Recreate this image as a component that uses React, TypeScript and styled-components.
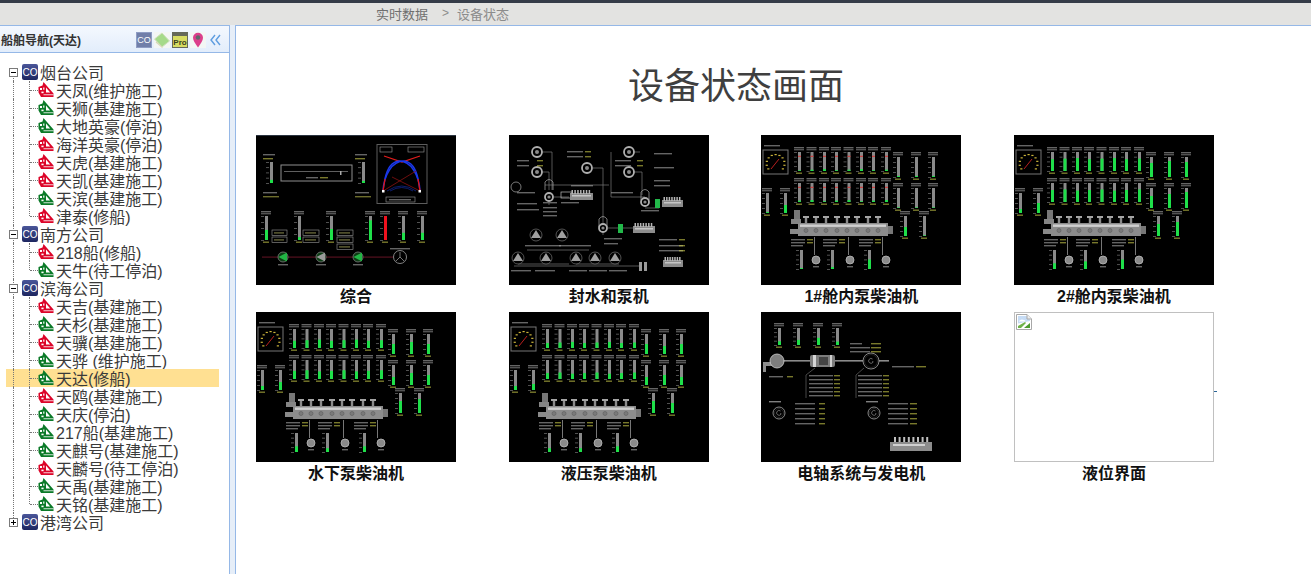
import React from 'react'
import styled, { createGlobalStyle } from 'styled-components'

const GlobalStyle = createGlobalStyle`
  html, body {
    margin: 0;
    padding: 0;
    background: #fff;
    overflow: hidden;
  }
  body {
    font-family: "Liberation Sans", "Noto Sans CJK SC", sans-serif;
  }
`

const Page = styled.div`
  display: flex;
  flex-direction: column;
  width: 1311px;
  height: 574px;
  overflow: hidden;
`

const TopBar = styled.header`
  box-sizing: border-box;
  height: 25px;
  flex: none;
  display: flex;
  align-items: center;
  padding: 0 0 2px 376px;
  background: #e3e3e1;
  border-top: 3px solid #353c48;
  font-size: 13px;
  color: #777;
`

const Crumb = styled.span<{ $muted?: boolean }>`
  color: ${({ $muted }) => ($muted ? '#8c8c8c' : '#6f6f6f')};
`

const CrumbSep = styled.span`
  margin: 0 8px 0 14px;
  color: #8c8c8c;
  font-size: 12px;
`

const Body = styled.div`
  flex: 1;
  display: flex;
  min-height: 0;
  background: #e6eef8;
`

const Sidebar = styled.aside`
  box-sizing: border-box;
  width: 230px;
  flex: none;
  background: #fff;
  border-top: 1px solid #95b8e7;
  border-right: 1px solid #95b8e7;
  display: flex;
  flex-direction: column;
`

const SideHeader = styled.div`
  box-sizing: border-box;
  height: 27px;
  flex: none;
  display: flex;
  align-items: center;
  justify-content: space-between;
  padding: 1px 8px 0 1px;
  background: linear-gradient(#f4f8fe, #e2edfb);
  border-bottom: 1px solid #95b8e7;
`

const SideTitle = styled.span`
  font-size: 12px;
  font-weight: 700;
  color: #333;
  white-space: nowrap;
`

const HeaderTools = styled.div`
  display: flex;
  align-items: center;
  gap: 2px;
`

const ToolCo = styled.span`
  box-sizing: border-box;
  width: 16px;
  height: 16px;
  display: flex;
  align-items: center;
  justify-content: center;
  background: #717fa9;
  border: 1px solid #8f9dc4;
  color: #fff;
  font: 400 9px "Liberation Sans", sans-serif;
`

const ToolPro = styled.span`
  box-sizing: border-box;
  width: 16px;
  height: 16px;
  display: flex;
  align-items: flex-end;
  justify-content: center;
  background: #d7dc62;
  border-top: 4px solid #65695a;
  border-left: 1px solid #65695a;
  border-right: 1px solid #65695a;
  border-bottom: 1px solid #65695a;
  color: #3b4020;
  font: 700 8px/9px "Liberation Sans", sans-serif;
`

const ToolSvg = styled.svg`
  display: block;
  width: 16px;
  height: 16px;
  background: #f3f6f4;
`

const Collapse = styled.svg`
  display: block;
  width: 11px;
  height: 12px;
  margin-left: 2px;
`

const Tree = styled.div`
  padding: 10px 10px 0 6px;
`

const Row = styled.div<{ $selected?: boolean; $child?: boolean }>`
  position: relative;
  height: 18px;
  display: flex;
  align-items: center;
  padding-left: ${({ $child }) => ($child ? '32px' : '3px')};
  background: ${({ $selected }) => ($selected ? '#ffe092' : 'transparent')};
  font-size: 16px;
  line-height: 18px;
  color: #3a3a3a;
  white-space: pre;
`

const RowText = styled.span`
  padding-top: 4px;
`

const GuideV = styled.span<{ $left: number; $top?: number; $bottom?: number }>`
  position: absolute;
  left: ${({ $left }) => $left}px;
  top: ${({ $top = 0 }) => $top}px;
  bottom: ${({ $bottom = 0 }) => $bottom}px;
  border-left: 1px dotted #777;
`

const GuideH = styled.span<{ $left: number; $width: number }>`
  position: absolute;
  left: ${({ $left }) => $left}px;
  width: ${({ $width }) => $width}px;
  top: 9px;
  border-top: 1px dotted #777;
`

const Toggle = styled.span`
  position: relative;
  box-sizing: border-box;
  flex: none;
  width: 9px;
  height: 9px;
  margin-right: 4px;
  background: #fff;
  border: 1px solid #7a7a7a;
`

const ToggleMark = styled.span<{ $plus?: boolean }>`
  position: absolute;
  left: 1px;
  top: 3px;
  width: 5px;
  height: 1px;
  background: #000;
  &::after {
    content: '';
    display: ${({ $plus }) => ($plus ? 'block' : 'none')};
    position: absolute;
    left: 2px;
    top: -2px;
    width: 1px;
    height: 5px;
    background: #000;
  }
`

const CompanyIcon = styled.span`
  box-sizing: border-box;
  position: relative;
  flex: none;
  width: 16px;
  height: 16px;
  margin-right: 2px;
  display: flex;
  align-items: center;
  justify-content: center;
  border-radius: 2px;
  background: linear-gradient(#4a5699, #1d2660);
  color: #fff;
  font: 400 10px "Liberation Sans", sans-serif;
`

const ShipSvg = styled.svg`
  position: relative;
  flex: none;
  display: block;
  width: 16px;
  height: 16px;
  margin-right: 2px;
`

const Main = styled.main`
  flex: 1;
  min-width: 0;
  margin-left: 5px;
  background: #fff;
  border-top: 1px solid #95b8e7;
  border-left: 1px solid #95b8e7;
  padding-left: 20px;
`

const Heading = styled.h1`
  width: 960px;
  margin: 0;
  padding-top: 36px;
  height: 73px;
  text-align: center;
  font-size: 36px;
  font-weight: 400;
  line-height: 50px;
  color: #3f3f3f;
`

const Gallery = styled.div`
  display: grid;
  grid-template-columns: repeat(4, 252.67px);
  grid-auto-rows: 177px;
`

const Tile = styled.figure`
  width: 200px;
  margin: 0;
`

const Shot = styled.svg`
  display: block;
  width: 200px;
  height: 150px;
  background: #000;
  filter: blur(0.5px);
`

const BrokenShot = styled.div`
  position: relative;
  box-sizing: border-box;
  width: 200px;
  height: 150px;
  padding: 1px;
  border: 1px solid #c0c0c0;
  &::after {
    content: '';
    position: absolute;
    right: -4px;
    top: 78px;
    width: 3px;
    height: 1px;
    background: #2a6496;
  }
`

const Caption = styled.figcaption`
  text-align: center;
  font-size: 16px;
  font-weight: 700;
  line-height: 24px;
  color: #111;
`

type Ship = { name: string; red?: boolean; selected?: boolean }
type Company = { name: string; open: boolean; ships: Ship[] }

const companies: Company[] = [
  {
    name: '烟台公司',
    open: true,
    ships: [
      { name: '天凤(维护施工)', red: true },
      { name: '天狮(基建施工)' },
      { name: '大地英豪(停泊)' },
      { name: '海洋英豪(停泊)', red: true },
      { name: '天虎(基建施工)', red: true },
      { name: '天凯(基建施工)', red: true },
      { name: '天滨(基建施工)' },
      { name: '津泰(修船)', red: true },
    ],
  },
  {
    name: '南方公司',
    open: true,
    ships: [{ name: '218船(修船)', red: true }, { name: '天牛(待工停泊)' }],
  },
  {
    name: '滨海公司',
    open: true,
    ships: [
      { name: '天吉(基建施工)', red: true },
      { name: '天杉(基建施工)' },
      { name: '天骥(基建施工)', red: true },
      { name: '天骅 (维护施工)' },
      { name: '天达(修船)', selected: true },
      { name: '天鸥(基建施工)', red: true },
      { name: '天庆(停泊)' },
      { name: '217船(基建施工)' },
      { name: '天麒号(基建施工)' },
      { name: '天麟号(待工停泊)', red: true },
      { name: '天禹(基建施工)' },
      { name: '天铭(基建施工)' },
    ],
  },
  { name: '港湾公司', open: false, ships: [] },
]

const ShipIcon = ({ red }: { red?: boolean }) => {
  const c = red ? '#dc0529' : '#0b7a28'
  return (
    <ShipSvg viewBox="0 0 16 16">
      <path d="M5.5 0 L15.5 11.5 V15 H3 L0.5 10.5 V5 L4.5 3.5 Z" fill={c} />
      <path d="M8 5.6 L12.2 10.4 H8 Z" fill="#fff" />
      <rect x="2" y="6" width="2" height="2" fill="#fff" />
      <rect x="5.2" y="5.5" width="1.2" height="2.2" fill="#fff" />
      <rect x="3.4" y="9.6" width="2.2" height="1.6" fill="#fff" />
      <rect x="5.5" y="12.4" width="10" height="0.8" fill="#fff" />
    </ShipSvg>
  )
}

const NavTree = () => (
  <Tree>
    {companies.map((company, ci) => {
      const lastCompany = ci === companies.length - 1
      return (
        <React.Fragment key={company.name}>
          <Row>
            <GuideV $left={7} $top={ci === 0 ? 9 : 0} $bottom={lastCompany ? 9 : 0} />
            <Toggle>
              <ToggleMark $plus={!company.open} />
            </Toggle>
            <CompanyIcon>CO</CompanyIcon>
            <RowText>{company.name}</RowText>
          </Row>
          {company.ships.map((ship, si) => (
            <Row key={ship.name} $child $selected={ship.selected}>
              <GuideV $left={7} />
              <GuideV $left={23} $bottom={si === company.ships.length - 1 ? 9 : 0} />
              <GuideH $left={24} $width={8} />
              <ShipIcon red={ship.red} />
              <RowText>{ship.name}</RowText>
            </Row>
          ))}
        </React.Fragment>
      )
    })}
  </Tree>
)

/* tiny label placeholder: the captions in the thumbnails are unreadable smudges */
const Smudge = ({ x, y, w, c = '#a8a8a8' }: { x: number; y: number; w: number; c?: string }) => (
  <rect x={x} y={y} width={w} height={1.4} fill={c} opacity={0.6} />
)

const Gauge = ({
  x,
  y,
  h,
  fill,
  color = '#1fe04a',
  mark,
  label = true,
}: {
  x: number
  y: number
  h: number
  fill: number
  color?: string
  mark?: boolean
  label?: boolean
}) => (
  <g>
    {label && <Smudge x={x - 5} y={y - 5} w={10} />}
    {label && <Smudge x={x - 5} y={y - 3} w={10} c="#888" />}
    <rect x={x - 1} y={y} width={3} height={h} fill="#8a8a8a" />
    <rect x={x - 1} y={y + h * (1 - fill)} width={3} height={h * fill} fill={color} />
    {mark && <rect x={x - 1} y={y + h * 0.2} width={3} height={1} fill="#d33" />}
    {Array.from({ length: 5 }, (_, i) => (
      <rect key={i} x={x - 5} y={y + (h * i) / 4} width={3} height={0.8} fill="#666" />
    ))}
    {label && <Smudge x={x - 3} y={y + h + 1.5} w={6} c="#c9c94a" />}
  </g>
)

const Pump = ({ x, y, fill }: { x: number; y: number; fill: string }) => (
  <g>
    <circle cx={x} cy={y} r={5} fill="#0c3d14" stroke="#7d7d7d" strokeWidth={0.8} />
    <path d={`M${x + 4} ${y - 4.5} L${x - 4.5} ${y} L${x + 4} ${y + 4.5} Z`} fill={fill} />
    <Smudge x={x - 5} y={y + 7} w={10} />
  </g>
)

const OverviewShot = () => (
  <Shot viewBox="0 0 200 150">
    <rect x="0" y="0" width="200" height="1" fill="#2b3440" />
    <Smudge x={7} y={19} w={12} />
    <Smudge x={7} y={23} w={10} c="#c9c94a" />
    <Gauge x={15} y={27} h={21} fill={0.15} label={false} />
    <Smudge x={7} y={57} w={14} />
    <Smudge x={7} y={61} w={16} c="#b5b54a" />
    <rect x="25" y="30" width="71" height="16" fill="none" stroke="#8f8f8f" />
    <rect x="28" y="36" width="64" height="0.8" fill="#777" />
    <rect x="84" y="36" width="1.5" height="4" fill="#aaa" />
    <Smudge x={50} y={42} w={12} />
    <Smudge x={64} y={42} w={8} c="#c9c94a" />
    <Smudge x={99} y={19} w={12} />
    <Smudge x={99} y={23} w={10} c="#c9c94a" />
    <Gauge x={107} y={27} h={21} fill={0.1} label={false} />
    <Smudge x={99} y={57} w={14} />
    <Smudge x={99} y={61} w={16} c="#b5b54a" />

    <rect x="121" y="9.5" width="50" height="59" fill="#000" stroke="#5c5c5c" />
    <rect x="124" y="12" width="12" height="5" fill="none" stroke="#999" strokeWidth="0.6" />
    <rect x="152" y="12" width="16" height="5" fill="none" stroke="#999" strokeWidth="0.6" />
    <path d="M128 21 L146 27 L164 21" fill="none" stroke="#e21c1c" strokeWidth="1.3" />
    <path d="M127 56 C128 40 136 26 148 26 C156 27 160 34 162 44" fill="none" stroke="#1a38e8" strokeWidth="1.5" />
    <path d="M164 56 C163 40 155 26 143 26 C135 27 131 34 129 44" fill="none" stroke="#1a38e8" strokeWidth="1.5" />
    <path d="M162 44 L164 56 M129 44 L127 56" stroke="#e01515" strokeWidth="1.3" />
    <path d="M127 56 L160 36 M164 56 L136 42" stroke="#8a1212" strokeWidth="0.8" />
    <path d="M131 56 Q146 46 160 56 M134 56 Q146 49 157 56" fill="none" stroke="#122a9a" strokeWidth="0.7" />
    <rect x="126" y="55" width="2.5" height="2.5" fill="#fff" />
    <rect x="162.5" y="55" width="2.5" height="2.5" fill="#fff" />
    <rect x="130" y="62" width="29" height="5" fill="none" stroke="#999" strokeWidth="0.6" />
    <Smudge x={133} y={64} w={22} />

    {[
      { x: 10, fill: 0.42 },
      { x: 43, fill: 0.12 },
      { x: 75, fill: 0.46 },
      { x: 114, fill: 0.82 },
      { x: 129, fill: 1, color: '#f0121e' },
      { x: 147, fill: 0.3 },
      { x: 166, fill: 0.3 },
    ].map(g => (
      <Gauge key={g.x} x={g.x} y={81} h={24} fill={g.fill} color={g.color} />
    ))}
    {[
      [16, 95, 15],
      [16, 102, 15],
      [47, 95, 16],
      [47, 102, 16],
      [81, 95, 16],
      [81, 102, 16],
      [81, 109, 16],
    ].map(([x, y, w]) => (
      <g key={`${x}-${y}`}>
        <rect x={x} y={y} width={w} height={5.5} fill="#000" stroke="#999" strokeWidth="0.6" />
        <Smudge x={x + 2} y={y + 2.2} w={w - 5} c="#a5a55a" />
      </g>
    ))}
    <rect x="6" y="121.5" width="131" height="1.2" fill="#55101f" />
    <Pump x={27} y={122} fill="#22b545" />
    <Pump x={65} y={122} fill="#9a9a9a" />
    <Pump x={102} y={122} fill="#22b545" />
    <circle cx="144" cy="122" r="6.5" fill="#000" stroke="#a5a5a5" strokeWidth="0.8" />
    <path d="M144 122 L144 117 M144 122 L140 126 M144 122 L148 126" stroke="#a5a5a5" strokeWidth="0.7" />
    <Smudge x={134} y={113} w={20} />
  </Shot>
)

const Ring = ({ x, y, r = 5 }: { x: number; y: number; r?: number }) => (
  <g>
    <circle cx={x} cy={y} r={r} fill="#000" stroke="#b0b0b0" strokeWidth="1.8" />
    <circle cx={x} cy={y} r={r * 0.4} fill="#8a8a8a" />
  </g>
)

const MiniEngine = ({ x, y, w }: { x: number; y: number; w: number }) => (
  <g>
    <rect x={x} y={y - 3} width={w} height={7} fill="#8c8c8c" />
    {Array.from({ length: 7 }, (_, i) => (
      <rect key={i} x={x + 1.5 + (i * (w - 3)) / 7} y={y - 6} width={1.5} height={4} fill="#b5b5b5" />
    ))}
    <rect x={x + 2} y={y - 1} width={w - 4} height={1.5} fill="#c5c5c5" />
  </g>
)

const SealShot = () => (
  <Shot viewBox="0 0 200 150">
    <path
      d="M33 17 H43 V55 M33 37 H40 V55 M84 33 H94 V88 M125 17 H131 M102 17 V62 H136 M125 37 H133 V60 M40 68 V70 M36 50 H100 M136 73 H150 M42 62 H60 M99 93 H124 M94 98 V100 M5 131 H130 M18 115 H80 M9 123 V129 H60 M67 129 H110"
      fill="none"
      stroke="#7a7a7a"
      strokeWidth="0.7"
    />
    <path d="M36 55 V47 Q40 42 44 47 V55 M132 65 V57 Q136 52 140 57 V65 M90 92 V84 Q94 79 98 84 V92" fill="none" stroke="#aaa" strokeWidth="0.7" />
    <Ring x={28} y={17} />
    <Ring x={28} y={37} />
    <Ring x={78} y={33} />
    <Ring x={120} y={17} />
    <Ring x={120} y={37} />
    <Ring x={40} y={62} r={4} />
    <Ring x={94} y={93} r={4} />
    <Ring x={136} y={67} r={4} />
    <circle cx="7" cy="52" r="5" fill="none" stroke="#aaa" strokeWidth="0.7" />
    <rect x="52" y="57" width="11" height="6" fill="none" stroke="#bbb" strokeWidth="0.7" />
    <MiniEngine x={61} y={61} w={23} />
    <MiniEngine x={124} y={94} w={22} />
    <MiniEngine x={153} y={68} w={21} />
    <MiniEngine x={154} y={128} w={20} />
    <rect x="109" y="89" width="5" height="9" fill="#22b84a" />
    <rect x="146" y="64" width="5" height="9" fill="#22b84a" />
    <rect x="130" y="127" width="3" height="9" fill="#999" />
    <rect x="135" y="127" width="3" height="9" fill="#999" />
    {[
      [27, 100],
      [53, 100],
      [9, 123],
      [37, 123],
      [67, 123],
      [86, 123],
      [106, 123],
    ].map(([x, y]) => (
      <g key={`${x}-${y}`}>
        <circle cx={x} cy={y} r={6} fill="#000" stroke="#888" strokeWidth="0.6" />
        <path d={`M${x} ${y - 5} L${x + 5} ${y + 3} L${x - 5} ${y + 3} Z`} fill="#a0a0a0" />
      </g>
    ))}
    {[
      [8, 25, 12],
      [8, 30, 12],
      [8, 57, 18],
      [8, 68, 20],
      [8, 74, 22],
      [34, 67, 14],
      [34, 72, 14],
      [34, 76, 14],
      [34, 80, 14],
      [58, 16, 16],
      [58, 21, 16],
      [62, 50, 22],
      [52, 67, 18],
      [106, 25, 16],
      [106, 30, 16],
      [145, 18, 18],
      [145, 32, 20],
      [145, 45, 16],
      [145, 50, 16],
      [102, 57, 22],
      [132, 75, 18],
      [95, 103, 18],
      [95, 108, 14],
      [150, 104, 18],
      [150, 110, 24],
      [150, 115, 24],
      [16, 110, 36],
      [50, 110, 32],
      [2, 135, 20],
      [26, 135, 20],
      [60, 135, 18],
      [80, 135, 18],
      [100, 135, 18],
    ].map(([x, y, w]) => (
      <Smudge key={`${x}-${y}`} x={x} y={y} w={w} />
    ))}
    {[
      [28, 25],
      [28, 30],
      [76, 16],
      [76, 21],
      [128, 25],
      [128, 30],
      [170, 104],
      [170, 110],
      [170, 115],
    ].map(([x, y]) => (
      <Smudge key={`${x}-${y}`} x={x} y={y} w={6} c="#c9c94a" />
    ))}
  </Shot>
)

const DIAL_TICKS = Array.from({ length: 11 }, (_, i) => Math.PI * (0.8 + (i * 1.4) / 10))

type EngineProps = {
  rowA: number
  rowB: number
  side: number[]
  low: number[]
  bottom: number[]
  shift?: number
  marks?: boolean
}

const ROW_X = [38, 50.5, 63, 75, 87.5, 100, 112, 125]
const CYLINDERS = [45, 55, 65, 76, 86, 96, 107, 117]

const EngineShot = ({ rowA, rowB, side, low, bottom, shift = 0, marks }: EngineProps) => (
  <Shot viewBox="0 0 200 150">
    <Smudge x={3} y={10} w={16} />
    <rect x="2" y="15" width="25" height="24" fill="#000" stroke="#777" />
    {DIAL_TICKS.map((a, i) => (
      <rect
        key={i}
        x={13.5 + Math.cos(a) * 9}
        y={28 + Math.sin(a) * 9}
        width={2.2}
        height={1.2}
        fill="#c9b23a"
      />
    ))}
    <path d="M10 34 L18 24" stroke="#c22" strokeWidth="0.9" />
    {ROW_X.map((x, i) => (
      <Gauge key={x} x={x} y={17} h={19} fill={rowA + (i % 3) * 0.03} mark={marks} />
    ))}
    {ROW_X.map((x, i) => (
      <Gauge key={x} x={x} y={48} h={19} fill={rowB + ((i + 1) % 3) * 0.03} mark={marks} />
    ))}
    {[137, 155, 172].map((x, i) => (
      <Gauge key={x} x={x} y={22} h={20} fill={side[i]} />
    ))}
    {[137, 155, 172].map((x, i) => (
      <Gauge key={x} x={x} y={53} h={20} fill={side[i + 3]} />
    ))}
    <Gauge x={6} y={58} h={20} fill={low[0]} />
    <Gauge x={24} y={58} h={20} fill={low[1]} />
    <Gauge x={144} y={81} h={20} fill={low[2]} />
    <Gauge x={163} y={81} h={20} fill={low[3]} />

    <g transform={`translate(0 ${shift})`}>
      <rect x="30" y="84" width="10" height="5" fill="#858585" />
      <rect x="33" y="75" width="6" height="9" fill="#777" />
      <rect x="29" y="94" width="8" height="5" fill="#8a8a8a" />
      {CYLINDERS.map(x => (
        <g key={x}>
          <rect x={x - 3} y={81} width={6} height={2} fill="#a5a5a5" />
          <rect x={x - 1.2} y={83} width={2.4} height={6} fill="#8a8a8a" />
        </g>
      ))}
      <rect x="37" y="88" width="90" height="13" fill="#8c8c8c" />
      <rect x="39" y="89.5" width="86" height="2.4" fill="#cfcfcf" />
      {CYLINDERS.map(x => (
        <circle key={x} cx={x} cy={95.5} r={2} fill="#7a7a7a" stroke="#5e5e5e" strokeWidth="0.6" />
      ))}
      <rect x="127" y="91" width="5" height="8" fill="#777" />
    </g>

    <g transform={`translate(0 ${shift})`}>
      {[30, 62, 98].map(x => (
        <g key={x}>
          <Smudge x={x} y={104} w={14} />
          <Smudge x={x} y={107} w={14} />
          <Smudge x={x} y={110} w={12} />
          <Smudge x={x + 16} y={104} w={6} c="#c9c94a" />
          <Smudge x={x + 16} y={107} w={6} c="#c9c94a" />
        </g>
      ))}
      {[
        [53, 55],
        [87, 89],
        [121, 125],
      ].map(([px, cx]) => (
        <g key={px}>
          <rect x={px} y={102} width={1} height={18} fill="#777" />
          <circle cx={cx} cy={125} r={4} fill="#8a8a8a" stroke="#bbb" strokeWidth="0.8" />
          <Smudge x={cx - 3} y={131} w={6} />
        </g>
      ))}
      {[40, 71, 108].map((x, i) => (
        <Gauge key={x} x={x} y={115} h={19} fill={bottom[i]} label={false} />
      ))}
    </g>
  </Shot>
)

const GenCircle = ({ x, y, r }: { x: number; y: number; r: number }) => (
  <g>
    <circle cx={x} cy={y} r={r} fill="#000" stroke="#aaa" strokeWidth="0.8" />
    <circle cx={x} cy={y} r={r - 1.5} fill="none" stroke="#444" strokeWidth="0.5" />
    <path d={`M${x + 1.5} ${y - 2} A2.4 2.4 0 1 0 ${x + 1.8} ${y + 1.5} V${y}`} fill="none" stroke="#aaa" strokeWidth="0.6" />
  </g>
)

const ShaftShot = () => (
  <Shot viewBox="0 0 200 150">
    {[18, 37, 57, 76].map((x, i) => (
      <Gauge key={x} x={x} y={16} h={17} fill={[0.22, 0.3, 0.42, 0.2][i]} />
    ))}
    <rect x="16" y="48" width="112" height="1.6" fill="#8a8a8a" />
    <rect x="2" y="50" width="12" height="4" fill="#8d8d8d" />
    <rect x="2" y="50" width="3" height="10" fill="#8d8d8d" />
    <circle cx="16" cy="49" r="7" fill="#7e7e7e" stroke="#cfcfcf" strokeWidth="0.8" />
    <rect x="49" y="43" width="25" height="12" rx="2" fill="#7d7d7d" />
    <rect x="52" y="43" width="3" height="12" fill="#d5d5d5" />
    <rect x="58" y="45" width="9" height="8" fill="#454545" />
    <rect x="69" y="43" width="2" height="12" fill="#cfcfcf" />
    <GenCircle x={110} y={49} r={8} />
    <path d="M45 63 L54 56 M45 63 V86 M95 63 L103 56 M95 63 V86" stroke="#777" strokeWidth="0.6" fill="none" />
    {[63, 67, 71, 75, 79, 83].map(y => (
      <g key={y}>
        <Smudge x={48} y={y} w={24} />
        <Smudge x={73} y={y} w={6} c="#c9c94a" />
        <Smudge x={97} y={y} w={24} />
        <Smudge x={122} y={y} w={6} c="#c9c94a" />
      </g>
    ))}
    <Smudge x={8} y={64} w={14} />
    <Smudge x={26} y={64} w={6} c="#c9c94a" />
    <Smudge x={89} y={31} w={12} />
    <Smudge x={89} y={35} w={20} />
    <Smudge x={89} y={39} w={20} />
    <Smudge x={110} y={31} w={10} c="#c9c94a" />
    <Smudge x={110} y={35} w={10} c="#c9c94a" />
    <Smudge x={110} y={39} w={10} c="#c9c94a" />
    <Smudge x={131} y={54} w={22} />
    <Smudge x={155} y={54} w={10} c="#c9c94a" />
    <Smudge x={8} y={89} w={12} c="#d5d5d5" />
    <Smudge x={105} y={89} w={12} c="#d5d5d5" />
    <GenCircle x={18} y={101} r={6} />
    <GenCircle x={113} y={101} r={6} />
    {[91, 96, 101, 106, 111].map(y => (
      <g key={y}>
        <Smudge x={34} y={y} w={20} />
        <Smudge x={58} y={y} w={6} c="#c9c94a" />
        <Smudge x={127} y={y} w={20} />
        <Smudge x={149} y={y} w={7} c="#c9c94a" />
      </g>
    ))}
    <rect x="129" y="130" width="42" height="9" fill="#8c8c8c" />
    {Array.from({ length: 8 }, (_, i) => (
      <rect key={i} x={133 + i * 4.6} y={125} width={2} height={5} fill="#c0c0c0" />
    ))}
    <rect x="132" y="132" width="32" height="2" fill="#cfcfcf" />
  </Shot>
)

const BrokenImageIcon = () => (
  <svg width="16" height="16" viewBox="0 0 16 16" style={{ display: 'block' }}>
    <path d="M0.5 0.5 H11 L15.5 5 V15.5 H0.5 Z" fill="#fff" stroke="#a8a8a8" />
    <path d="M2 2 H10.5 L14 5.5 V7 L2 9.5 Z" fill="#c6dcf5" />
    <path d="M3 7 Q5 4.5 8 6 Q10 6 9 7.5 H3 Z" fill="#fff" />
    <path d="M2 14 L2 12 L9 8 L10 9 L5 14 Z" fill="#6fb24a" />
    <path d="M8 14 L14 9 V14 Z" fill="#4b9a30" />
    <path d="M11 0.5 V5 H15.5" fill="#eee" stroke="#a8a8a8" />
  </svg>
)

const App = () => (
  <Page>
    <GlobalStyle />
    <TopBar>
      <Crumb>实时数据</Crumb>
      <CrumbSep>&gt;</CrumbSep>
      <Crumb $muted>设备状态</Crumb>
    </TopBar>
    <Body>
      <Sidebar>
        <SideHeader>
          <SideTitle>船舶导航(天达)</SideTitle>
          <HeaderTools>
            <ToolCo>CO</ToolCo>
            <ToolSvg viewBox="0 0 16 16">
              <path d="M0.5 7 L8 1 L15.5 9 L8 15 Z" fill="#a5da8a" stroke="#cfe0bd" />
              <path d="M2 10 L8.5 15.5" stroke="#d8d8b8" strokeWidth="1.2" />
            </ToolSvg>
            <ToolPro>Pro</ToolPro>
            <ToolSvg viewBox="0 0 16 16">
              <path d="M8 15.5 C5 11 3 8.5 3 5.8 A5 5 0 0 1 13 5.8 C13 8.5 11 11 8 15.5 Z" fill="#dc3f8c" />
              <circle cx="8" cy="5.5" r="2.2" fill="#5d6a6a" />
            </ToolSvg>
            <Collapse viewBox="0 0 11 12">
              <path d="M5 1 L1 6 L5 11 M10 1 L6 6 L10 11" fill="none" stroke="#5d9de0" strokeWidth="1.4" />
            </Collapse>
          </HeaderTools>
        </SideHeader>
        <NavTree />
      </Sidebar>
      <Main>
        <Heading>设备状态画面</Heading>
        <Gallery>
          <Tile>
            <OverviewShot />
            <Caption>综合</Caption>
          </Tile>
          <Tile>
            <SealShot />
            <Caption>封水和泵机</Caption>
          </Tile>
          <Tile>
            <EngineShot
              rowA={0.04}
              rowB={0.04}
              side={[0.05, 0.05, 0.05, 0.03, 0.03, 0.03]}
              low={[0.05, 0.4, 0.45, 0.03]}
              bottom={[0.05, 0.1, 0.5]}
              marks
            />
            <Caption>1#舱内泵柴油机</Caption>
          </Tile>
          <Tile>
            <EngineShot
              rowA={0.62}
              rowB={0.6}
              side={[0.7, 0.8, 0.75, 0.6, 0.7, 0.8]}
              low={[0.2, 0.5, 0.6, 0.7]}
              bottom={[0.3, 0.4, 0.5]}
            />
            <Caption>2#舱内泵柴油机</Caption>
          </Tile>
          <Tile>
            <EngineShot
              rowA={0.38}
              rowB={0.4}
              side={[0.5, 0.6, 0.5, 0.4, 0.6, 0.5]}
              low={[0.2, 0.4, 0.6, 0.7]}
              bottom={[0.3, 0.2, 0.3]}
              shift={6}
            />
            <Caption>水下泵柴油机</Caption>
          </Tile>
          <Tile>
            <EngineShot
              rowA={0.26}
              rowB={0.28}
              side={[0.5, 0.4, 0.5, 0.4, 0.5, 0.4]}
              low={[0.2, 0.3, 0.6, 0.5]}
              bottom={[0.2, 0.2, 0.3]}
              shift={6}
            />
            <Caption>液压泵柴油机</Caption>
          </Tile>
          <Tile>
            <ShaftShot />
            <Caption>电轴系统与发电机</Caption>
          </Tile>
          <Tile>
            <BrokenShot>
              <BrokenImageIcon />
            </BrokenShot>
            <Caption>液位界面</Caption>
          </Tile>
        </Gallery>
      </Main>
    </Body>
  </Page>
)

export default App
